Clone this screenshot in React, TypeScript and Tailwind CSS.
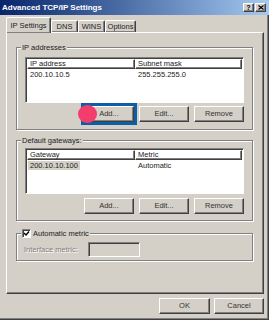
import React from "react";

const raised =
    "border border-t-white border-l-white border-r-[#404040] border-b-[#404040] shadow-[inset_-1px_-1px_0_#808080]";
const sunken =
    "border border-t-[#808080] border-l-[#808080] border-r-white border-b-white shadow-[inset_1px_1px_0_#404040]";

const Btn = ({ label, className = "" }: { label: string; className?: string }) => {
    return (
        <div
            className={`${raised} h-[16px] flex items-center justify-center leading-none text-[#333] bg-[#d4d0c8] ${className}`}
        >
            {label}
        </div>
    );
};

const Group = ({
    label,
    className = "",
    children,
}: {
    label: React.ReactNode;
    className?: string;
    children: React.ReactNode;
}) => {
    return (
        <div
            className={`relative w-[237px] border border-[#808080] shadow-[inset_1px_1px_0_#fff,1px_1px_0_#fff] ${className}`}
        >
            <div className="absolute left-[4px] top-[-5px] bg-[#d4d0c8] px-[1px] leading-[9px] flex items-center gap-[2px]">
                {label}
            </div>
            {children}
        </div>
    );
};

const ListView = ({
    cols,
    row,
    selected = false,
}: {
    cols: [string, string];
    row: [string, string];
    selected?: boolean;
}) => {
    return (
        <div className={`${sunken} bg-white h-[46px] p-[1px]`}>
            <div className="flex h-[10px] leading-[8px]">
                <div className={`${raised} w-[108px] pl-[2px]`}>{cols[0]}</div>
                <div className={`${raised} flex-1 pl-[2px]`}>{cols[1]}</div>
            </div>
            <div className="flex h-[9px] leading-[9px] mt-[1px]">
                <div className="w-[108px] pl-[1px]">
                    <span className={selected ? "bg-[#d4d0c8] px-[2px]" : "px-[2px]"}>{row[0]}</span>
                </div>
                <div className="flex-1 pl-[3px]">{row[1]}</div>
            </div>
        </div>
    );
};

const ButtonRow = ({ focused = false }: { focused?: boolean }) => {
    return (
        <div className="flex justify-end gap-[5px]">
            <div className="relative">
                <Btn
                    label="Add..."
                    className={
                        focused
                            ? "w-[50px] outline-[3px] outline-solid outline-[#0d5ea6]"
                            : "w-[50px]"
                    }
                />
                {focused && (
                    <div className="absolute left-[-6px] top-[-1px] w-[19px] h-[18px] rounded-full bg-[#f23d6d]" />
                )}
            </div>
            <Btn label="Edit..." className="w-[50px]" />
            <Btn label="Remove" className="w-[50px]" />
        </div>
    );
};

const App = () => {
    return (
        <div className="w-[269px] h-[320px] bg-[#d4d0c8] overflow-hidden font-['Liberation_Sans',Arial,sans-serif] text-[7.5px] text-[#222] shadow-[inset_-1px_-1px_0_#404040,inset_-2px_-2px_0_#808080]">
            {/* title bar */}
            <div className="h-[15px] bg-linear-to-r from-[#0a246a] to-[#a6caf0] flex items-center justify-between pl-[2px] pr-[3px]">
                <span className="text-white font-bold text-[8px] leading-none">
                    Advanced TCP/IP Settings
                </span>
                <div className="flex gap-[1px]">
                    <div className={`${raised} bg-[#d4d0c8] w-[11px] h-[9px] flex items-center justify-center font-bold text-[7px] leading-none text-black`}>
                        ?
                    </div>
                    <div className={`${raised} bg-[#d4d0c8] w-[11px] h-[9px] flex items-center justify-center`}>
                        <svg width="6" height="5" viewBox="0 0 6 5">
                            <path d="M0.5 0.5 L5.5 4.5 M5.5 0.5 L0.5 4.5" stroke="#000" strokeWidth="1.2" />
                        </svg>
                    </div>
                </div>
            </div>

            {/* tabs */}
            <div className="ml-[6px] mt-[2px] h-[15px] flex items-end">
                <div className={`${raised} relative z-10 mb-[-1px] w-[45px] h-[16px] border-b-0 bg-[#d4d0c8] rounded-t-[2px] flex items-center justify-center leading-none`}>
                    IP Settings
                </div>
                <div className={`${raised} w-[27px] h-[12px] rounded-t-[2px] flex items-center justify-center leading-none border-b-0`}>
                    DNS
                </div>
                <div className={`${raised} w-[27px] h-[12px] rounded-t-[2px] flex items-center justify-center leading-none border-b-0`}>
                    WINS
                </div>
                <div className={`${raised} w-[31px] h-[12px] rounded-t-[2px] flex items-center justify-center leading-none border-b-0`}>
                    Options
                </div>
            </div>

            {/* panel */}
            <div className={`${raised} ml-[6px] w-[258px] h-[262px] pl-[9px] pt-[14px]`}>
                <Group label="IP addresses" className="pt-[9px] px-[8px] pb-[7px]">
                    <ListView cols={["IP address", "Subnet mask"]} row={["200.10.10.5", "255.255.255.0"]} />
                    <div className="mt-[3px]">
                        <ButtonRow focused />
                    </div>
                </Group>

                <Group label="Default gateways:" className="mt-[10px] pt-[7px] px-[8px] pb-[6px]">
                    <ListView cols={["Gateway", "Metric"]} row={["200.10.10.100", "Automatic"]} selected />
                    <div className="mt-[4px]">
                        <ButtonRow />
                    </div>
                </Group>

                <Group
                    label={
                        <>
                            <span className={`${sunken} bg-white w-[9px] h-[9px] flex items-center justify-center`}>
                                <svg width="7" height="7" viewBox="0 0 7 7">
                                    <path d="M1 3 L3 5 L6 1.5" stroke="#000" strokeWidth="1.4" fill="none" />
                                </svg>
                            </span>
                            <span>Automatic metric</span>
                        </>
                    }
                    className="mt-[12px] pt-[8px] pl-[7px] pb-[3px]"
                >
                    <div className="flex items-center h-[15px]">
                        <span className="w-[64px] text-[#808080] [text-shadow:1px_1px_0_#fff]">
                            Interface metric:
                        </span>
                        <div className={`${sunken} w-[52px] h-[15px] bg-[#d4d0c8]`} />
                    </div>
                </Group>
            </div>

            {/* dialog buttons */}
            <div className="ml-[6px] w-[258px] mt-[4px] flex justify-end gap-[4px]">
                <Btn label="OK" className="w-[51px]" />
                <Btn label="Cancel" className="w-[50px]" />
            </div>
        </div>
    );
};

export default App;
